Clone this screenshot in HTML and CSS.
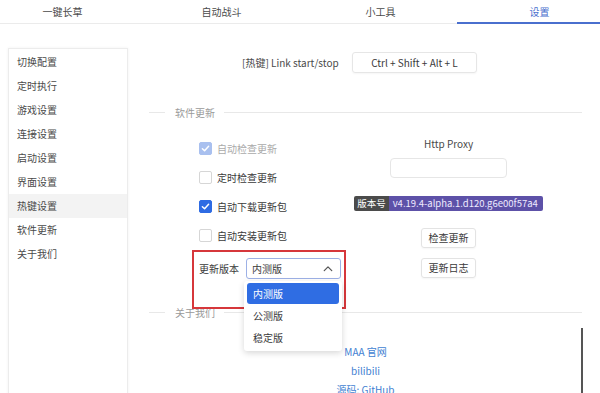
FILE: index.html
```html
<!DOCTYPE html>
<html lang="zh-CN">
<head>
<meta charset="utf-8">
<title>设置</title>
<link rel="stylesheet" href="styles.css">
</head>
<body>
<div class="tabs">
  <div class="tab">一键长草</div>
  <div class="tab">自动战斗</div>
  <div class="tab">小工具</div>
  <div class="tab active">设置</div>
</div>
<div class="page">
  <nav class="side">
    <div class="item">切换配置</div>
    <div class="item">定时执行</div>
    <div class="item">游戏设置</div>
    <div class="item">连接设置</div>
    <div class="item">启动设置</div>
    <div class="item">界面设置</div>
    <div class="item sel">热键设置</div>
    <div class="item">软件更新</div>
    <div class="item">关于我们</div>
  </nav>
  <main class="main">
    <div class="hotkey">
      <span class="hk-label">[热键] Link start/stop</span>
      <div class="hk-input">Ctrl + Shift + Alt + L</div>
    </div>
    <div class="divider"><span>软件更新</span></div>
    <div class="update">
      <div class="left">
        <div class="cb disabled"><span class="box checked"><svg viewBox="0 0 12 12"><path d="M2.6 6.2 L5 8.5 L9.4 3.6"/></svg></span>自动检查更新</div>
        <div class="cb"><span class="box"></span>定时检查更新</div>
        <div class="cb"><span class="box checked"><svg viewBox="0 0 12 12"><path d="M2.6 6.2 L5 8.5 L9.4 3.6"/></svg></span>自动下载更新包</div>
        <div class="cb"><span class="box"></span>自动安装更新包</div>
        <div class="ver-row">
          <span class="ver-label">更新版本</span>
          <div class="select">
            <span>内测版</span>
            <svg class="chev" viewBox="0 0 12 8"><path d="M1.5 6.5 L6 2 L10.5 6.5"/></svg>
            <div class="dropdown">
              <div class="opt on">内测版</div>
              <div class="opt">公测版</div>
              <div class="opt">稳定版</div>
            </div>
          </div>
        </div>
      </div>
      <div class="right">
        <div class="proxy-label">Http Proxy</div>
        <div class="proxy-input"></div>
        <div class="badge"><span class="b-key">版本号</span><span class="b-val">v4.19.4-alpha.1.d120.g6e00f57a4</span></div>
        <div class="btn first">检查更新</div>
        <div class="btn">更新日志</div>
      </div>
    </div>
    <div class="divider about"><span>关于我们</span></div>
    <div class="links">
      <div class="link">MAA 官网</div>
      <div class="link">bilibili</div>
      <div class="link">源码: GitHub</div>
    </div>
  </main>
  <div class="scrollbar"></div>
  <div class="redbox"></div>
</div>
</body>
</html>
```

FILE: styles.css
```css
* { box-sizing: border-box; }
html, body { margin: 0; padding: 0; }
body {
  width: 600px;
  height: 393px;
  overflow: hidden;
  background: #fff;
  font-family: "Noto Sans CJK SC", "Noto Sans", sans-serif;
  font-size: 10px;
  color: #444;
}
.tabs {
  display: flex;
  width: 640px;
  margin-left: -17px;
  height: 24px;
  border-bottom: 1px solid #ebebeb;
}
.tab {
  position: relative;
  flex: 0 0 159px;
  text-align: center;
  line-height: 23px;
  font-size: 10px;
  color: #4a4a4a;
}
.tab.active { color: #4a6fce; }
.tab.active::after {
  content: "";
  position: absolute;
  left: -3px;
  right: 0;
  bottom: -1px;
  height: 2px;
  background: #4a6fce;
}
.page {
  position: relative;
  display: flex;
  height: 369px;
}
.side {
  margin: 24px 0 0 8px;
  width: 120px;
  height: 360px;
  border: 1px solid #ececec;
  box-shadow: 0 0 3px rgba(0,0,0,0.06);
  padding-top: 1px;
  flex: none;
}
.item {
  height: 24px;
  line-height: 24px;
  padding-left: 8px;
  color: #4a4a4a;
}
.item.sel { background: #f3f3f3; }
.main {
  margin-left: 21px;
  width: 433px;
  display: flex;
  flex-direction: column;
}
.hotkey {
  display: flex;
  align-items: center;
  margin: 28px 0 0 93px;
}
.hk-label { width: 110px; color: #4a4a4a; }
.hk-input {
  width: 125px;
  height: 21px;
  border: 1px solid #e6e6e6;
  border-radius: 3px;
  box-shadow: 0 1px 2px rgba(0,0,0,0.04);
  text-align: center;
  line-height: 19px;
  color: #3a3a3a;
}
.divider {
  display: flex;
  align-items: center;
  margin-top: 32px;
  height: 14px;
  color: #9a9a9a;
}
.divider::before {
  content: "";
  width: 16px;
  height: 1px;
  background: #e8e8e8;
  margin-right: 10px;
}
.divider::after {
  content: "";
  flex: 1;
  height: 1px;
  background: #e8e8e8;
  margin-left: 9px;
}
.divider.about { margin-top: 26px; }
.update {
  display: flex;
  margin-top: 15px;
}
.left {
  margin-left: 50px;
  width: 150px;
  display: flex;
  flex-direction: column;
}
.cb {
  display: flex;
  align-items: center;
  height: 29px;
  color: #3a3a3a;
}
.cb.disabled { color: #aaa; }
.box {
  width: 13px;
  height: 13px;
  border: 1px solid #d6d6d6;
  border-radius: 2px;
  margin-right: 5px;
  display: flex;
  align-items: center;
  justify-content: center;
  background: #fff;
}
.box.checked { background: #2e6be3; border-color: #2e6be3; }
.cb.disabled .box.checked { background: #a9c0ef; border-color: #a9c0ef; }
.box svg { width: 11px; height: 11px; }
.box svg path { fill: none; stroke: #fff; stroke-width: 1.6; stroke-linecap: round; stroke-linejoin: round; }
.ver-row {
  display: flex;
  align-items: center;
  margin-top: 8px;
  height: 21px;
}
.ver-label { width: 47px; color: #3a3a3a; }
.select {
  position: relative;
  width: 95px;
  height: 21px;
  border: 1px solid #9db1e6;
  border-radius: 3px;
  display: flex;
  align-items: center;
  justify-content: space-between;
  padding: 0 7px 0 5px;
  color: #3a3a3a;
}
.chev { width: 10px; height: 7px; }
.chev path { fill: none; stroke: #555; stroke-width: 1.5; stroke-linecap: round; stroke-linejoin: round; }
.dropdown {
  position: absolute;
  left: -3px;
  top: 22px;
  width: 98px;
  padding: 2px 3px;
  background: #fff;
  border-radius: 3px;
  box-shadow: 0 2px 6px rgba(0,0,0,0.16);
  z-index: 2;
}
.opt {
  height: 22px;
  line-height: 21px;
  padding-left: 6px;
  color: #3a3a3a;
  border-radius: 3px;
}
.opt.on { background: #2f6de3; color: #fff; height: 21px; margin-bottom: 1px; }
.right {
  width: 195px;
  margin-left: 2px;
  display: flex;
  flex-direction: column;
  align-items: center;
}
.proxy-label { margin-top: 3px; line-height: 14px; color: #4a4a4a; }
.proxy-input {
  margin-top: 7px;
  width: 117px;
  height: 20px;
  border: 1px solid #e6e6e6;
  border-radius: 4px;
}
.badge {
  margin-top: 18px;
  display: flex;
  height: 15px;
  line-height: 15px;
  font-size: 9.5px;
  border-radius: 2px;
  overflow: hidden;
  color: #fff;
  white-space: nowrap;
}
.b-key { background: #4b4b4b; padding: 0 3px; flex: none; }
.b-val { background: #5d51a8; padding: 0 5px 0 4px; flex: none; color: #eeeaff; }
.btn {
  margin-top: 10px;
  width: 55px;
  height: 20px;
  border: 1px solid #e3e3e3;
  border-radius: 3px;
  text-align: center;
  line-height: 18px;
  color: #3a3a3a;
  box-shadow: 0 1px 2px rgba(0,0,0,0.04);
}
.btn.first { margin-top: 17px; }
.links {
  margin-top: 23px;
  display: flex;
  flex-direction: column;
  align-items: center;
}
.link {
  height: 19px;
  line-height: 19px;
  color: #3f7fd2;
}
.scrollbar {
  position: absolute;
  left: 581px;
  top: 304px;
  width: 2px;
  height: 80px;
  background: #555;
}
.redbox {
  position: absolute;
  left: 192px;
  top: 226px;
  width: 154px;
  height: 59px;
  border: 2px solid #d6373b;
}
```
